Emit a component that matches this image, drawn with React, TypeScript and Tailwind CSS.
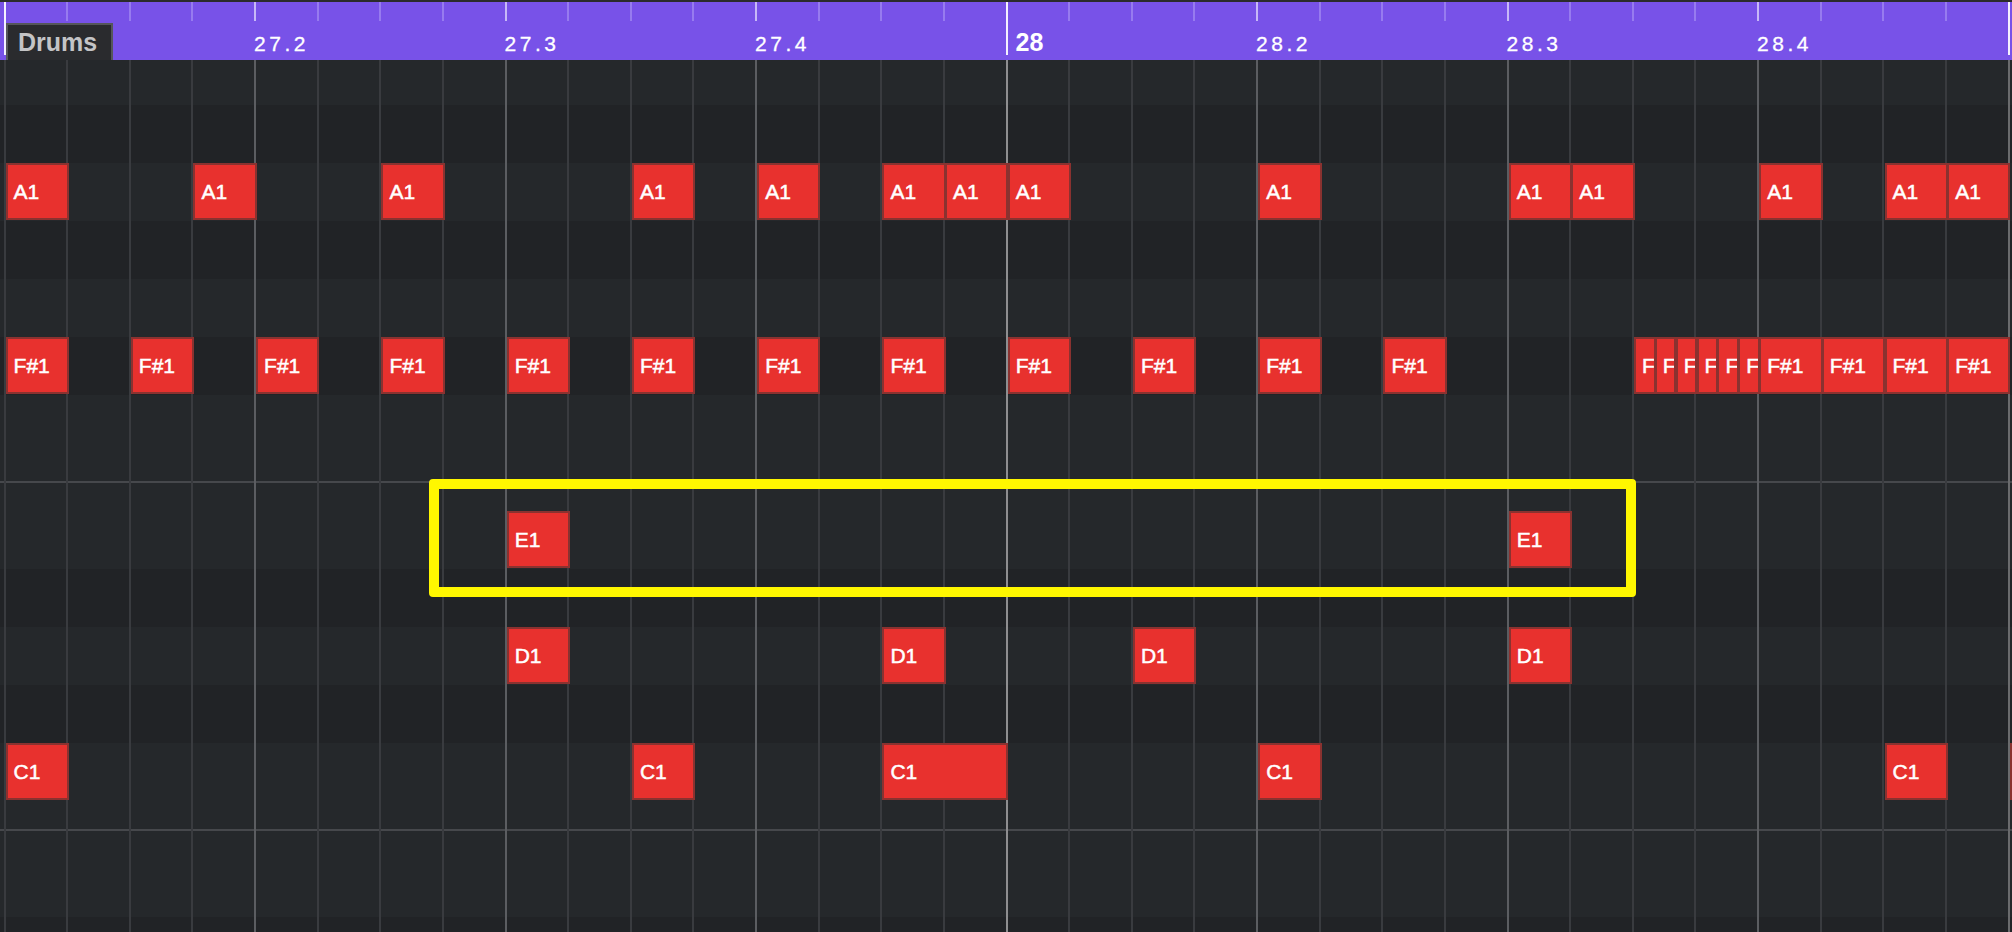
const STEP = 62.63
const ROW = 58

const ticks = Array.from({ length: 33 }, (_, i) => i)

const labels: Record<number, { text: string; bar?: boolean }> = {
  4: { text: "27.2" },
  8: { text: "27.3" },
  12: { text: "27.4" },
  16: { text: "28", bar: true },
  20: { text: "28.2" },
  24: { text: "28.3" },
  28: { text: "28.4" },
}

// lighter / darker lanes, top to bottom
const bands = [1, 0, 1, 0, 1, 0, 1, 1, 1, 0, 1, 0, 1, 1, 1, 0]
const splitRows = [7, 13]

const lanes = [
  { pitch: "A1", row: 2, hits: [0, 3, 6, 10, 12, 14, 15, 16, 20, 24, 25, 28, 30, 31] },
  { pitch: "F#1", row: 5, hits: [0, 2, 4, 6, 8, 10, 12, 14, 16, 18, 20, 22, 28, 29, 30, 31] },
  { pitch: "E1", row: 8, hits: [8, 24] },
  { pitch: "D1", row: 10, hits: [8, 14, 18, 24] },
  { pitch: "C1", row: 12, hits: [0, 10, 20, 30, 32] },
]

type Note = { pitch: string; row: number; at: number; len: number }

const notes: Note[] = [
  ...lanes.flatMap((l) =>
    l.hits.filter((h) => !(l.pitch === "C1" && h === 14)).map((h) => ({ pitch: l.pitch, row: l.row, at: h, len: 1 }))
  ),
  { pitch: "C1", row: 12, at: 14, len: 2 },
  ...Array.from({ length: 6 }, (_, j) => ({ pitch: "F#1", row: 5, at: 26 + j / 3, len: 1 / 3 })),
]

export default function App() {
  return (
    <div className="w-[2012px] h-[932px] overflow-hidden bg-[#222427] font-['Liberation_Sans',Arial,sans-serif]">
      <div className="h-[2px] bg-[#2b2b2c]" />

      {/* Ruler */}
      <div className="relative h-[58px] bg-[#7852e8]">
        <div className="flex h-full pl-[3.6px]">
          {ticks.map((i) => {
            const label = labels[i]
            const tick =
              i % 16 === 0
                ? "h-[53px] bg-[#f4f0ff]"
                : i % 4 === 0
                ? "h-[19px] bg-[#c7b8f7]"
                : "h-[19px] bg-[#977bef]"
            return (
              <div key={i} className="flex shrink-0 w-[62.63px] items-start">
                <div className={`w-[2px] shrink-0 ${tick}`} />
                {label &&
                  (label.bar ? (
                    <span className="mt-[28px] ml-[8px] text-[25px] leading-[25px] font-bold text-white">{label.text}</span>
                  ) : (
                    <span className="mt-[31px] ml-[-2px] text-[21px] leading-[21px] tracking-[3.5px] text-white whitespace-nowrap [-webkit-text-stroke:0.3px_white]">
                      {label.text}
                    </span>
                  ))}
              </div>
            )
          })}
        </div>
        <div className="absolute left-[6px] top-[21px] w-[107px] h-[37px] bg-[#2a2b2e] border-2 border-b-0 border-[#55565a] pl-[10px] pt-[5px]">
          <span className="text-[25px] leading-[25px] font-bold text-[#c4c4c6]">Drums</span>
        </div>
      </div>

      {/* Note grid */}
      <div className="relative h-[872px] overflow-hidden">
        <div className="flex flex-col mt-[-13.3px]">
          {bands.map((light, k) => (
            <div key={k} className={`h-[58px] shrink-0 ${light ? "bg-[#25282b]" : "bg-[#212326]"}`}>
              {splitRows.includes(k) && (
                <>
                  <div className="h-[28px]" />
                  <div className="h-[2px] bg-[#46484c]" />
                </>
              )}
            </div>
          ))}
        </div>

        <div className="absolute inset-0 flex pl-[3.6px]">
          {ticks.map((i) => (
            <div
              key={i}
              className={`shrink-0 w-[62.63px] border-l-2 ${
                i === 16
                  ? "border-[#8e8e90]"
                  : i === 32
                  ? "border-[#6a6b6d]"
                  : i % 4 === 0 && i !== 0
                  ? "border-[#5b5d61]"
                  : "border-[#393b3f]"
              }`}
            />
          ))}
        </div>

        {notes.map((n, idx) => (
          <div
            key={idx}
            className="absolute h-[57px] flex items-center overflow-hidden bg-[#e8312e] border-2 border-[#8a3230] pl-[6px] text-[21px] leading-[21px] text-white whitespace-nowrap [-webkit-text-stroke:0.5px_white]"
            style={{ left: 5.6 + n.at * STEP, top: -13.3 + n.row * ROW, width: n.len * STEP + 0.7 }}
          >
            {n.pitch}
          </div>
        ))}

        <div className="absolute left-[429px] top-[419px] w-[1207px] h-[118px] border-[10px] border-[#fff700] rounded-[4px]" />
      </div>
    </div>
  )
}
